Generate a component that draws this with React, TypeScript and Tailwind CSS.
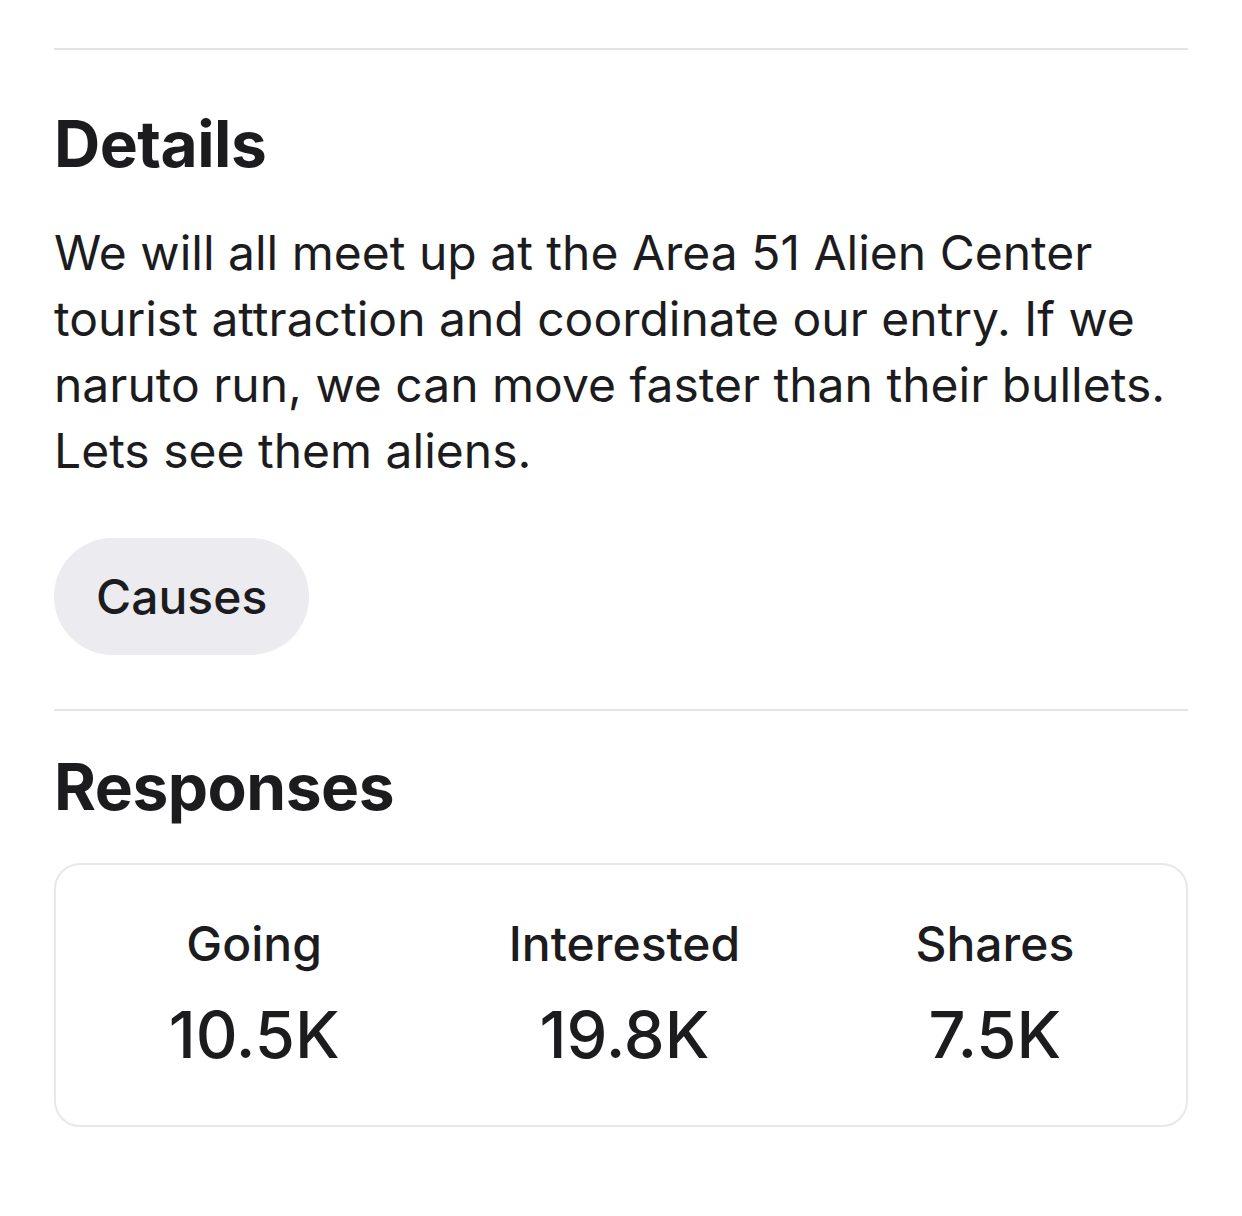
export default function App() {
  const stats = [
    { label: "Going", value: "10.5K" },
    { label: "Interested", value: "19.8K" },
    { label: "Shares", value: "7.5K" },
  ];

  return (
    <div className="min-h-[1216px] w-[1242px] bg-white px-[54px] pt-[48px] text-[#1c1c1e] font-['Inter',sans-serif]">
      <div className="h-[2px] bg-[#e3e3e5]" />

      <h2 className="mt-[62px] text-[64px] font-bold leading-none tracking-[-0.5px]">Details</h2>

      <p className="mt-[44px] text-[48px] leading-[66px]">
        We will all meet up at the Area 51 Alien Center tourist attraction and coordinate our entry. If we naruto
        run, we can move faster than their bullets. Lets see them aliens.
      </p>

      <div className="mt-[54px] flex">
        <span className="flex h-[117px] items-center rounded-full bg-[#ebebf0] px-[42px] text-[48px] font-medium">
          Causes
        </span>
      </div>

      <div className="mt-[54px] h-[2px] bg-[#e3e3e5]" />

      <h2 className="mt-[44px] text-[64px] font-bold leading-none tracking-[-0.5px]">Responses</h2>

      <div className="mt-[44px] grid h-[264px] grid-cols-3 rounded-[26px] border-2 border-[#e8e8ea] pl-[13px] pr-[6px] pt-[55px]">
        {stats.map((s) => (
          <div key={s.label} className="flex flex-col items-center">
            <span className="text-[48px] font-medium leading-none">{s.label}</span>
            <span className="mt-[34px] text-[65px] font-medium leading-none">{s.value}</span>
          </div>
        ))}
      </div>
    </div>
  );
}
